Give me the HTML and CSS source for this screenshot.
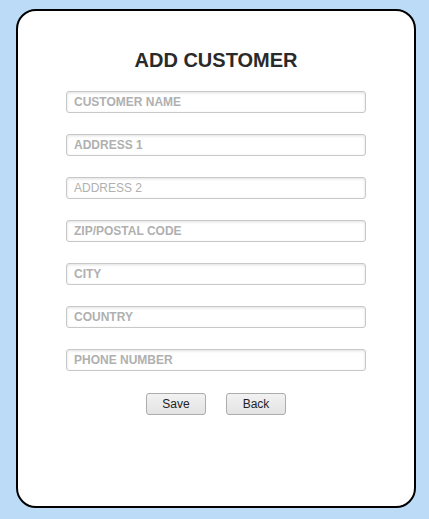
FILE: index.html
```html
<!DOCTYPE html>
<html>
<head>
<meta charset="utf-8">
<link rel="stylesheet" href="styles.css">
</head>
<body>
<div class="card">
  <h1 class="title">ADD CUSTOMER</h1>
  <form class="form">
    <input class="field req" type="text" placeholder="CUSTOMER NAME">
    <input class="field req" type="text" placeholder="ADDRESS 1">
    <input class="field" type="text" placeholder="ADDRESS 2">
    <input class="field req" type="text" placeholder="ZIP/POSTAL CODE">
    <input class="field req" type="text" placeholder="CITY">
    <input class="field req" type="text" placeholder="COUNTRY">
    <input class="field req" type="text" placeholder="PHONE NUMBER">
    <div class="actions">
      <button class="btn" type="button">Save</button>
      <button class="btn" type="button">Back</button>
    </div>
  </form>
</div>
</body>
</html>
```
FILE: styles.css
```css
html, body {
  margin: 0;
  padding: 0;
}
body {
  background: #bbdbf7;
  font-family: "Liberation Sans", Arial, sans-serif;
  min-height: 519px;
  padding-top: 9px;
  padding-left: 16px;
  box-sizing: border-box;
}
.card {
  width: 400px;
  height: 499px;
  box-sizing: border-box;
  background: #fff;
  border: 2px solid #000;
  border-radius: 20px;
  padding-top: 37px;
  display: flex;
  flex-direction: column;
  align-items: center;
}
.title {
  margin: 0;
  font-size: 20px;
  line-height: 24px;
  font-weight: bold;
  color: #2a2a2a;
}
.form {
  margin-top: 19px;
  display: flex;
  flex-direction: column;
  align-items: center;
  gap: 21px;
}
.field {
  width: 300px;
  height: 22px;
  box-sizing: border-box;
  border: 1px solid #c8c8c8;
  border-radius: 3px;
  padding: 0 7px;
  font-family: "Liberation Sans", Arial, sans-serif;
  font-size: 12px;
  color: #333;
  background: #fff;
  box-shadow: inset 0 1px 3px rgba(0, 0, 0, 0.12);
  outline: none;
  margin: 0;
}
.field::placeholder {
  color: #b0b0b0;
  opacity: 1;
}
.field.req::placeholder {
  font-weight: bold;
}
.actions {
  margin-top: 1px;
  display: flex;
  gap: 20px;
}
.btn {
  width: 60px;
  height: 22px;
  box-sizing: border-box;
  border: 1px solid #acacac;
  border-radius: 3px;
  background: linear-gradient(#f2f2f2, #e3e3e3);
  font-family: "Liberation Sans", Arial, sans-serif;
  font-size: 12px;
  color: #222;
  padding: 0;
  margin: 0;
}
```
